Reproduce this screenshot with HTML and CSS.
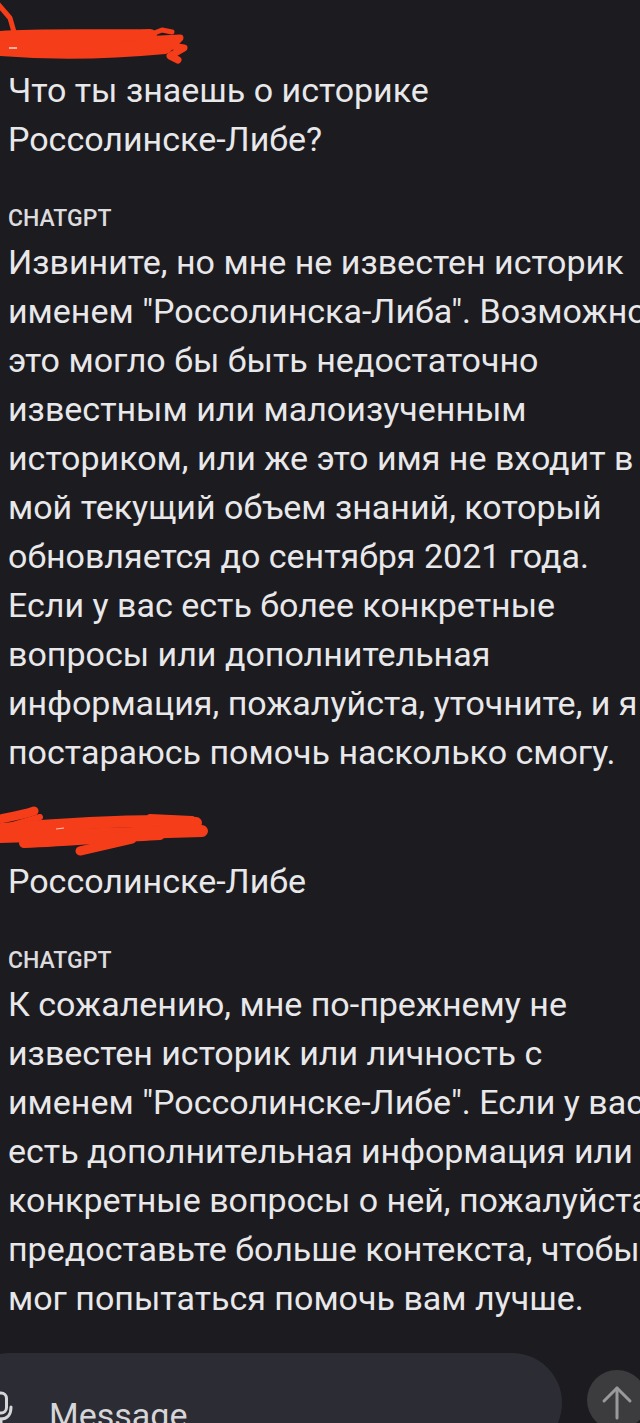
FILE: index.html
```html
<!DOCTYPE html>
<html lang="ru">
<head>
<meta charset="utf-8">
<title>ChatGPT</title>
<link rel="stylesheet" href="styles.css">
</head>
<body>
<div class="screen">
  <main class="chat">
    <div class="redact redact-1">
      <svg width="200" height="66" viewBox="0 0 200 66">
        <g fill="none" stroke="#f53d19" stroke-linecap="round" stroke-linejoin="round">
          <path d="M-2 4 L10 18 L14 32" stroke-width="5"/>
          <path d="M0 38 C40 35 90 37 150 36" stroke-width="14"/>
          <path d="M0 48 C50 52 100 52 165 46" stroke-width="16"/>
          <path d="M140 40 L180 38 L172 46 L184 48 L170 56 L178 60" stroke-width="7"/>
          <path d="M152 34 L162 30 L172 32" stroke-width="5"/>
        </g>
        <path d="M9 48 L17 48" stroke="#fff" stroke-width="1.5" opacity="0.8"/>
      </svg>
    </div>
    <div class="user-msg">
      <span class="line">Что ты знаешь о историке</span>
      <span class="line">Россолинске-Либе?</span>
    </div>
    <div class="label">CHATGPT</div>
    <div class="bot-msg">
      <span class="line">Извините, но мне не известен историк</span>
      <span class="line">именем "Россолинска-Либа". Возможно,</span>
      <span class="line">это могло бы быть недостаточно</span>
      <span class="line">известным или малоизученным</span>
      <span class="line">историком, или же это имя не входит в</span>
      <span class="line">мой текущий объем знаний, который</span>
      <span class="line">обновляется до сентября 2021 года.</span>
      <span class="line">Если у вас есть более конкретные</span>
      <span class="line">вопросы или дополнительная</span>
      <span class="line">информация, пожалуйста, уточните, и я</span>
      <span class="line">постараюсь помочь насколько смогу.</span>
    </div>
    <div class="redact redact-2">
      <svg width="220" height="82" viewBox="0 0 220 82">
        <g fill="none" stroke="#f53d19" stroke-linecap="round" stroke-linejoin="round">
          <path d="M0 42 C10 40 22 38 34 34" stroke-width="9"/>
          <path d="M6 50 L40 40" stroke-width="6"/>
          <path d="M2 52 C50 48 110 44 160 44 L196 46" stroke-width="12"/>
          <path d="M0 60 C50 58 120 56 202 54" stroke-width="12"/>
          <path d="M24 66 C70 64 120 60 160 58" stroke-width="10"/>
          <path d="M80 74 L132 62" stroke-width="9"/>
          <path d="M150 40 L192 42" stroke-width="6"/>
        </g>
        <path d="M56 52 L64 51" stroke="#fff" stroke-width="1.2" opacity="0.7"/>
      </svg>
    </div>
    <div class="user-msg">
      <span class="line">Россолинске-Либе</span>
    </div>
    <div class="label">CHATGPT</div>
    <div class="bot-msg">
      <span class="line">К сожалению, мне по-прежнему не</span>
      <span class="line">известен историк или личность с</span>
      <span class="line">именем "Россолинске-Либе". Если у вас</span>
      <span class="line">есть дополнительная информация или</span>
      <span class="line">конкретные вопросы о ней, пожалуйста,</span>
      <span class="line">предоставьте больше контекста, чтобы я</span>
      <span class="line">мог попытаться помочь вам лучше.</span>
    </div>
  </main>
  <footer class="composer">
    <div class="input-pill">
      <svg class="mic" width="26" height="40" viewBox="0 0 26 40">
        <g fill="none" stroke="#d6d6d8" stroke-width="3" stroke-linecap="round">
          <rect x="7.5" y="2" width="11" height="20" rx="5.5"/>
          <path d="M3 16 C3 24 7 28 13 28 C19 28 23 24 23 16"/>
          <path d="M13 28 L13 36"/>
        </g>
      </svg>
      <span class="placeholder">Message</span>
    </div>
    <div class="send">
      <svg width="60" height="60" viewBox="0 0 60 60">
        <g fill="none" stroke="#9a9a9c" stroke-width="3" stroke-linecap="round" stroke-linejoin="round">
          <path d="M30 48 L30 18"/>
          <path d="M17 31 L30 18 L43 31"/>
        </g>
      </svg>
    </div>
  </footer>
</div>
</body>
</html>
```

FILE: styles.css
```css
html, body {
  margin: 0;
  padding: 0;
  background: #1c1b20;
}

.screen {
  width: 640px;
  height: 1423px;
  overflow: hidden;
  font-family: Roboto, "Noto Sans", sans-serif;
  color: #e8e8ea;
}

.chat {
  padding-left: 8px;
}

.redact {
  margin-left: -8px;
}

.redact svg {
  display: block;
}

.redact-1 {
  height: 66px;
}

.redact-2 {
  height: 80px;
}

.line {
  display: block;
  white-space: nowrap;
}

.user-msg,
.bot-msg {
  font-size: 34px;
  line-height: 49px;
}

.label {
  margin-top: 42px;
  margin-bottom: 6px;
  font-size: 23px;
  line-height: 26px;
  font-weight: 500;
  color: #dcdcde;
}

.composer {
  display: flex;
  align-items: flex-start;
  margin-top: 30px;
  gap: 25px;
}

.input-pill {
  flex: none;
  display: flex;
  align-items: flex-start;
  gap: 35px;
  margin-left: -40px;
  width: 602px;
  height: 100px;
  box-sizing: border-box;
  padding: 38px 0 0 28px;
  background: #2c2c34;
  border-radius: 50px;
}

.mic {
  flex: none;
  display: block;
}

.placeholder {
  font-size: 34px;
  line-height: 40px;
  color: #d6d6d8;
  margin-top: 4px;
}

.send {
  flex: none;
  width: 60px;
  height: 60px;
  margin-top: 17px;
  border-radius: 50%;
  background: #3c3c3f;
}

.send svg {
  display: block;
}
```
